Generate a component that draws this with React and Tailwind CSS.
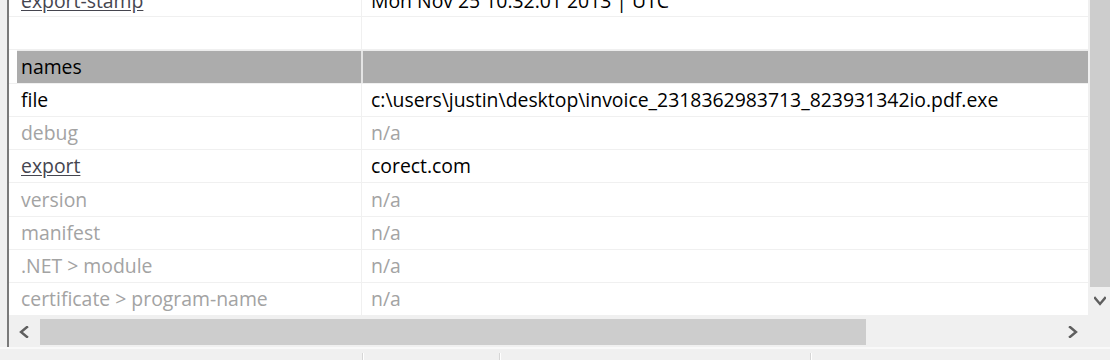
import React from 'react';

const rows = [
  { k: 'export-stamp', v: 'Mon Nov 25 10:32:01 2013 | UTC', link: true, h: 'h-[34px] -mt-[17px] pt-[2px]' },
  { k: '', v: '', h: 'h-[33px]' },
  { k: 'names', v: '', header: true, h: 'h-[34px]' },
  { k: 'file', v: 'c:\\users\\justin\\desktop\\invoice_2318362983713_823931342io.pdf.exe', h: 'h-[33px]' },
  { k: 'debug', v: 'n/a', dim: true, h: 'h-[33px]' },
  { k: 'export', v: 'corect.com', link: true, h: 'h-[33px]' },
  { k: 'version', v: 'n/a', dim: true, h: 'h-[34px]' },
  { k: 'manifest', v: 'n/a', dim: true, h: 'h-[33px]' },
  { k: '.NET > module', v: 'n/a', dim: true, h: 'h-[33px]' },
  { k: 'certificate > program-name', v: 'n/a', dim: true, h: 'h-[33px]' },
];

const Row = ({ row }) => {
  if (row.header) {
    return (
      <div className={`${row.h} flex border-b border-[#f0f0f0] shrink-0`}>
        <div className="w-[8px] shrink-0" />
        <div className="flex flex-1 bg-[#acacac] border-t border-[#ececec]">
          <div className="w-[344px] shrink-0 flex items-center pl-[4px] text-black">{row.k}</div>
          <div className="w-[2px] bg-[#e4e4e4]" />
          <div className="flex-1" />
        </div>
      </div>
    );
  }
  const keyColor = row.dim
    ? 'text-[#a3a3a3]'
    : row.link
      ? 'text-[#45454f] underline underline-offset-[2px]'
      : 'text-black';
  const valColor = row.dim ? 'text-[#a3a3a3]' : 'text-black';
  return (
    <div className={`${row.h} flex border-b border-[#f0f0f0] shrink-0`}>
      <div className="w-[352px] shrink-0 flex items-center pl-[12px] whitespace-nowrap">
        <span className={keyColor}>{row.k}</span>
      </div>
      <div className="w-px bg-[#f0f0f0]" />
      <div className={`flex-1 flex items-center pl-[9px] whitespace-nowrap ${valColor}`}>{row.v}</div>
    </div>
  );
};

const Chevron = ({ dir }) => {
  const d = {
    left: 'M8 1 L2 6 L8 11',
    right: 'M2 1 L8 6 L2 11',
    down: 'M1 2 L6 8 L11 2',
  }[dir];
  return (
    <svg width="12" height="12" viewBox="0 0 12 12" fill="none">
      <path d={d} stroke="#5f5f5f" strokeWidth="2.4" strokeLinecap="square" />
    </svg>
  );
};

export default function App() {
  return (
    <div
      className="w-[1110px] h-[360px] bg-[#f0f0f0] overflow-hidden flex flex-col text-[19.4px]"
      style={{ fontFamily: '"Open Sans", "Noto Sans", sans-serif' }}
    >
      <div className="flex h-[347px] shrink-0">
        <div className="w-[7px] shrink-0" />
        <div className="w-[2px] shrink-0 bg-[#7a7a7a]" />
        <div className="flex-1 flex flex-col">
          <div className="flex h-[316px] shrink-0">
            <div className="w-[1079px] bg-white overflow-hidden flex flex-col">
              {rows.map((r, i) => (
                <Row key={i} row={r} />
              ))}
            </div>
            <div className="flex-1 flex flex-col pl-[2px]">
              <div className="h-[287px] bg-[#cdcdcd]" />
              <div className="flex-1 flex items-center justify-center">
                <Chevron dir="down" />
              </div>
            </div>
          </div>
          <div className="flex-1 flex items-center">
            <div className="w-[31px] h-full flex items-center justify-center">
              <Chevron dir="left" />
            </div>
            <div className="w-[826px] h-[26px] bg-[#cdcdcd]" />
            <div className="w-[200px]" />
            <div className="w-[16px] flex items-center justify-center">
              <Chevron dir="right" />
            </div>
          </div>
        </div>
      </div>
      <div className="flex-1 flex border-t-2 border-[#f9f9f9] pt-[4px]">
        <div className="w-[362px]" />
        <div className="w-[2px] bg-[#d6d6d6] border-r border-white" />
        <div className="w-[135px]" />
        <div className="w-[2px] bg-[#d6d6d6] border-r border-white" />
        <div className="w-[309px]" />
        <div className="w-[2px] bg-[#d6d6d6] border-r border-white" />
      </div>
    </div>
  );
}
